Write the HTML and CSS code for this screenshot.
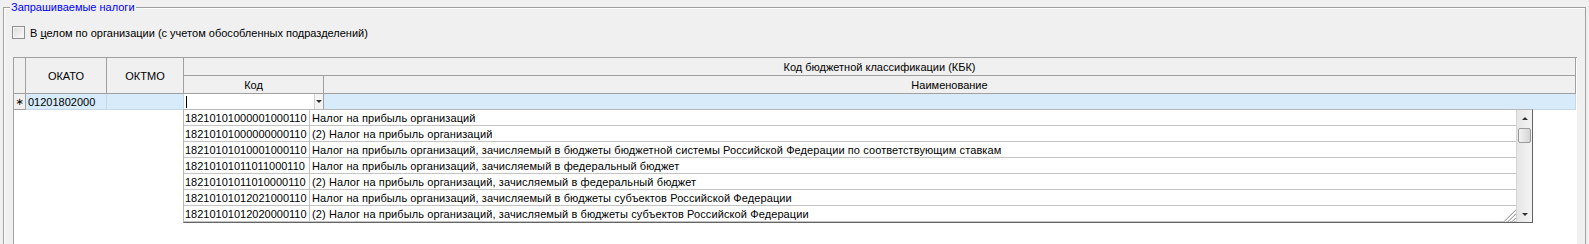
FILE: index.html
```html
<!DOCTYPE html>
<html lang="ru">

<head>
    <meta charset="UTF-8">
    <title>Запрашиваемые налоги</title>
    <link rel="stylesheet" href="styles.css">
</head>

<body>
    <fieldset class="group">
        <legend class="group-title">Запрашиваемые налоги</legend>

        <label class="check">
            <span class="check-box"></span>
            <span>В <u>ц</u>елом по организации (с учетом обособленных подразделений)</span>
        </label>

        <div class="grid">
            <div class="grid-table">
                <div class="hc span-rows"></div>
                <div class="hc span-rows">ОКАТО</div>
                <div class="hc span-rows">ОКТМО</div>
                <div class="hc kbk">Код бюджетной классификации (КБК)</div>
                <div class="hc">Код</div>
                <div class="hc">Наименование</div>

                <div class="dc dc-ind">∗</div>
                <div class="dc">01201802000</div>
                <div class="dc"></div>
                <div class="dc dc-edit">
                    <span class="caret"></span>
                    <span class="edit-btn"><span class="arrow-down"></span></span>

                    <div class="drop">
                        <div class="drop-list">
                            <div class="drop-row"><span class="drop-code">18210101000001000110</span><span class="drop-name">Налог на прибыль организаций</span></div>
                            <div class="drop-row"><span class="drop-code">18210101000000000110</span><span class="drop-name">(2) Налог на прибыль организаций</span></div>
                            <div class="drop-row"><span class="drop-code">18210101010001000110</span><span class="drop-name">Налог на прибыль организаций, зачисляемый в бюджеты бюджетной системы Российской Федерации по соответствующим ставкам</span></div>
                            <div class="drop-row"><span class="drop-code">18210101011011000110</span><span class="drop-name">Налог на прибыль организаций, зачисляемый в федеральный бюджет</span></div>
                            <div class="drop-row"><span class="drop-code">18210101011010000110</span><span class="drop-name">(2) Налог на прибыль организаций, зачисляемый в федеральный бюджет</span></div>
                            <div class="drop-row"><span class="drop-code">18210101012021000110</span><span class="drop-name">Налог на прибыль организаций, зачисляемый в бюджеты субъектов Российской Федерации</span></div>
                            <div class="drop-row"><span class="drop-code">18210101012020000110</span><span class="drop-name">(2) Налог на прибыль организаций, зачисляемый в бюджеты субъектов Российской Федерации</span></div>

                            <svg class="grip" width="15" height="15" viewBox="0 0 15 15">
                                <path d="M3 15 L15 3 M7 15 L15 7 M11 15 L15 11" stroke="#a8a8a8" stroke-width="1.2" fill="none"/>
                                <path d="M4 15 L15 4 M8 15 L15 8 M12 15 L15 12" stroke="#ffffff" stroke-width="1" fill="none"/>
                            </svg>
                        </div>
                        <div class="scrollbar">
                            <span class="sb-btn"><span class="arrow-up"></span></span>
                            <span class="sb-thumb"></span>
                            <span class="sb-track"></span>
                            <span class="sb-btn"><span class="arrow-down"></span></span>
                        </div>
                    </div>
                </div>
                <div class="dc"></div>
            </div>
        </div>
    </fieldset>
</body>

</html>
```

FILE: styles.css
```css
* {
    box-sizing: border-box;
}

body {
    margin: 0;
    height: 244px;
    overflow: hidden;
    background-color: #f0f0f0;
    color: #000;
    font-family: "Liberation Sans", Arial, sans-serif;
    font-size: 11px;
}

/* group box (its bottom edge is below the visible area) */
.group {
    margin: 1px 3px 0;
    padding: 0;
    height: 243px;
    min-width: 0;
    border: 1px solid #a0a0a0;
    border-bottom: none;
    box-shadow: inset 1px 1px 0 #fff;
}

.group-title {
    margin-left: 6px;
    padding: 0 1px;
    line-height: 13px;
    color: #0000ff;
    background-color: #f0f0f0;
}

.check {
    display: flex;
    align-items: center;
    gap: 5px;
    height: 13px;
    margin: 12px 0 0 8px;
}

.check-box {
    width: 13px;
    height: 13px;
    border: 1px solid #8e8f8f;
    background: linear-gradient(135deg, #dcdcdc, #fbfbfb);
    box-shadow: inset 0 0 0 1px #f4f4f4;
}

/* grid */
.grid {
    width: 1564px;
    height: 187px;
    margin: 18px 0 0 9px;
    background-color: #fff;
    border-left: 1px solid #a0a0a0;
    border-top: 1px solid #a0a0a0;
}

.grid-table {
    display: grid;
    grid-template-columns: 12px 81px 77px 140px 1252px;
    grid-template-rows: 18px 18px 16px;
}

.hc {
    display: flex;
    align-items: center;
    justify-content: center;
    background-color: #f0f0f0;
    border-right: 1px solid #a0a0a0;
    border-bottom: 1px solid #a0a0a0;
}

.span-rows {
    grid-row: span 2;
}

.kbk {
    grid-column: span 2;
}

.dc {
    display: flex;
    align-items: center;
    padding-left: 2px;
    background-color: #d7ebfa;
    border-right: 1px solid #c6d8e6;
    border-bottom: 1px solid #c6d8e6;
}

.dc-ind {
    justify-content: center;
    padding-left: 0;
    font-family: "DejaVu Sans", sans-serif;
    font-size: 10px;
    background-color: #f0f0f0;
    border-right-color: #a0a0a0;
    border-bottom-color: #a0a0a0;
}

.dc-edit {
    position: relative;
    padding: 0;
    background-color: #fff;
    border-right-color: #a0a0a0;
}

.caret {
    width: 1px;
    height: 12px;
    margin-left: 2px;
    background-color: #000;
}

.edit-btn {
    display: flex;
    align-items: center;
    justify-content: center;
    width: 9px;
    height: 100%;
    margin-left: auto;
    background-color: #f4f4f4;
    border-left: 1px solid #d0d0d0;
}

.arrow-down,
.arrow-up {
    width: 0;
    height: 0;
    border-left: 3px solid transparent;
    border-right: 3px solid transparent;
}

.arrow-down {
    border-top: 3px solid #303030;
}

.arrow-up {
    border-bottom: 3px solid #303030;
}

/* dropdown list */
.drop {
    position: absolute;
    left: -1px;
    top: 15px;
    z-index: 2;
    display: flex;
    width: 1350px;
    height: 114px;
    background-color: #fff;
    border: 1px solid;
    border-color: #b8b8b8 #646464 #646464 #b8b8b8;
}

.drop-list {
    position: relative;
    flex: 1;
    border-right: 1px solid #d4d4d4;
}

.drop-row {
    display: flex;
    align-items: center;
    height: 16px;
    border-bottom: 1px solid #c4c4c4;
    white-space: nowrap;
}

.drop-code {
    display: flex;
    align-items: center;
    width: 126px;
    height: 100%;
    padding-left: 1px;
    border-right: 1px solid #c4c4c4;
}

.drop-name {
    padding-left: 2px;
    letter-spacing: 0.1px;
}

.grip {
    position: absolute;
    right: 0;
    bottom: 0;
}

.scrollbar {
    display: flex;
    flex-direction: column;
    width: 15px;
    background: linear-gradient(90deg, #e6e6e6, #f4f4f4);
}

.sb-btn {
    display: flex;
    align-items: center;
    justify-content: center;
    height: 16px;
}

.sb-thumb {
    height: 15px;
    margin: 2px 1px 0;
    border: 1px solid #9a9a9a;
    border-radius: 2px;
    background: linear-gradient(90deg, #f2f2f2, #d4d4d4);
}

.sb-track {
    flex: 1;
}
```
